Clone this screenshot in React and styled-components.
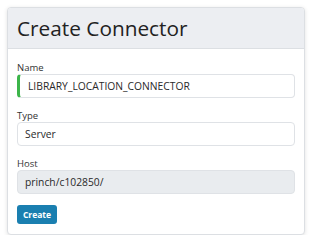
import React from "react";
import styled, { createGlobalStyle } from "styled-components";

const Global = createGlobalStyle`
  html, body { margin: 0; padding: 0; background: #ffffff; }
  body { font-family: "Open Sans", "Noto Sans", sans-serif; color: #212529; }
  * { box-sizing: border-box; }
`;

const Page = styled.div`
  padding: 7px 8px 0 7px;
`;

const Card = styled.div`
  width: 298px;
  background: #fff;
  border: 1px solid #dcdfe3;
  border-radius: 4px;
  box-shadow: 0 1px 4px rgba(0, 0, 0, 0.12);
  overflow: hidden;
`;

const Header = styled.div`
  height: 41px;
  background: #eceef2;
  border-bottom: 1px solid #dcdfe3;
  display: flex;
  align-items: center;
  padding: 0 9px;
`;

const Title = styled.h1`
  margin: 0;
  font-size: 20.8px;
  font-weight: 400;
  color: #222;
  line-height: 1;
`;

const Body = styled.div`
  padding: 13px 9px 10px 9px;
  display: flex;
  flex-direction: column;
`;

const Group = styled.div`
  display: flex;
  flex-direction: column;
  margin-bottom: 12px;
`;

const Label = styled.label`
  font-size: 9.5px;
  line-height: 12px;
  color: #333;
`;

const Field = styled.div`
  height: 24px;
  border: 1px solid #dfe2e6;
  border-left: ${(p) => (p.$valid ? "3px solid #3cb54a" : "1px solid #dfe2e6")};
  border-radius: 4px;
  background: ${(p) => (p.$disabled ? "#e9ecef" : "#fff")};
  display: flex;
  align-items: center;
  padding-left: ${(p) => (p.$valid ? "8px" : "7px")};
  font-size: 10.3px;
  color: #2a2a2a;
`;

const Button = styled.button`
  align-self: flex-start;
  margin-top: -1px;
  height: 19px;
  width: 40px;
  padding: 0;
  border: none;
  border-radius: 3px;
  background: #1a7fb0;
  color: #fff;
  font-family: "Open Sans", sans-serif;
  font-weight: 700;
  font-size: 8.5px;
`;

export default function App() {
  return (
    <>
      <Global />
      <Page>
        <Card>
          <Header>
            <Title>Create Connector</Title>
          </Header>
          <Body>
            <Group>
              <Label>Name</Label>
              <Field $valid>LIBRARY_LOCATION_CONNECTOR</Field>
            </Group>
            <Group>
              <Label>Type</Label>
              <Field>Server</Field>
            </Group>
            <Group>
              <Label>Host</Label>
              <Field $disabled>princh/c102850/</Field>
            </Group>
            <Button>Create</Button>
          </Body>
        </Card>
      </Page>
    </>
  );
}
